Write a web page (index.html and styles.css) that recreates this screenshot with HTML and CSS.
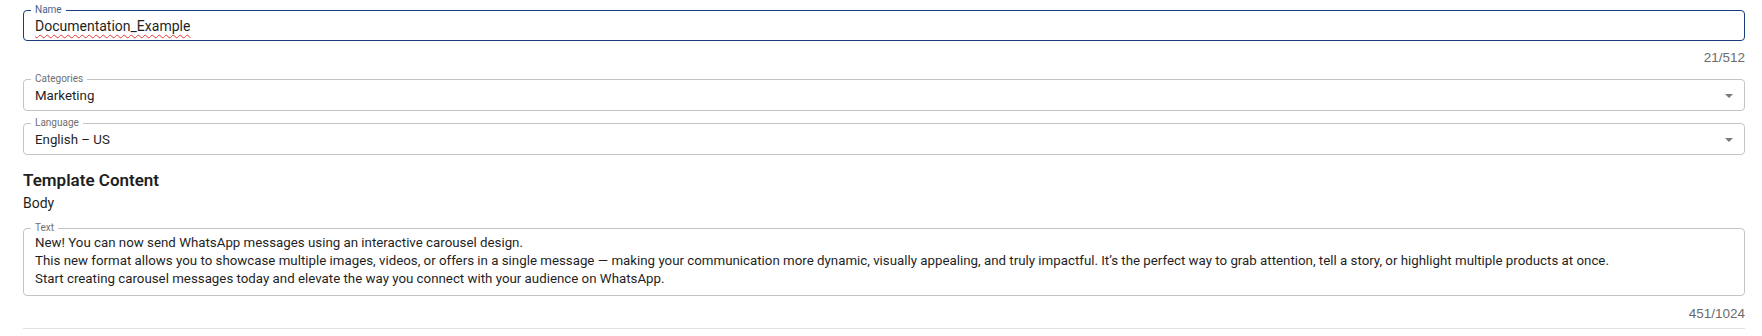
FILE: index.html
```html
<!DOCTYPE html>
<html lang="en">
<head>
<meta charset="utf-8">
<title>Template</title>
<link rel="stylesheet" href="styles.css">
</head>
<body>
<div class="form">
  <fieldset class="field field-focus">
    <legend class="field-label">Name</legend>
    <div class="field-value"><span class="spell">Documentation_Example</span></div>
  </fieldset>
  <div class="counter counter-name">21/512</div>

  <fieldset class="field field-cat">
    <legend class="field-label">Categories</legend>
    <div class="field-value select-row"><span>Marketing</span><span class="caret"></span></div>
  </fieldset>

  <fieldset class="field field-lang">
    <legend class="field-label">Language</legend>
    <div class="field-value select-row"><span>English – US</span><span class="caret"></span></div>
  </fieldset>

  <h2 class="section-title">Template Content</h2>
  <div class="sub-title">Body</div>

  <fieldset class="field field-text">
    <legend class="field-label">Text</legend>
    <div class="textarea">
      <div>New! You can now send WhatsApp messages using an interactive carousel design.</div>
      <div>This new format allows you to showcase multiple images, videos, or offers in a single message — making your communication more dynamic, visually appealing, and truly impactful. It’s the perfect way to grab attention, tell a story, or highlight multiple products at once.</div>
      <div>Start creating carousel messages today and elevate the way you connect with your audience on WhatsApp.</div>
    </div>
  </fieldset>
  <div class="counter counter-text">451/1024</div>
  <div class="divider"></div>
</div>
</body>
</html>
```

FILE: styles.css
```css
html, body {
  margin: 0;
  padding: 0;
  background: #ffffff;
}
body {
  font-family: Roboto, "Liberation Sans", sans-serif;
  color: #1f1f1f;
}
.form {
  display: flex;
  flex-direction: column;
  padding: 4px 17px 0 23px;
}
.field {
  margin: 0;
  padding: 0 11px;
  border: 1px solid #c4c4c4;
  border-radius: 4px;
  min-width: 0;
}
.field-focus {
  border-color: #173d7a;
}
.field-label {
  font-size: 10px;
  line-height: 12px;
  padding: 0 4px;
  margin-left: -4px;
  color: #6f6f6f;
}
.field-focus .field-label {
  color: #4a6390;
}
.field-value {
  margin-top: -4px;
  height: 29px;
  font-size: 13.3px;
  line-height: 29px;
  color: #1f1f1f;
}
.field-focus .field-value {
  height: 28px;
  line-height: 28px;
  font-size: 14px;
}
.spell {
  text-decoration: underline wavy #e53935;
  text-decoration-thickness: 1px;
  text-underline-offset: 3px;
}
.select-row {
  display: flex;
  align-items: center;
  justify-content: space-between;
}
.caret {
  width: 0;
  height: 0;
  margin-right: 0;
  border-left: 4px solid transparent;
  border-right: 4px solid transparent;
  border-top: 4px solid #7a7a7a;
}
.counter {
  align-self: flex-end;
  font-family: "Liberation Sans", Arial, sans-serif;
  font-size: 13.5px;
  line-height: 16px;
  color: #6b6b6b;
}
.counter-name {
  margin-top: 9px;
}
.field-cat {
  margin-top: 7px;
}
.field-lang {
  margin-top: 6px;
}
.section-title {
  margin: 15px 0 0;
  font-size: 17px;
  line-height: 20px;
  font-weight: 600;
  color: #1f1f1f;
}
.sub-title {
  margin-top: 4px;
  font-size: 14px;
  line-height: 18px;
  color: #1f1f1f;
}
.field-text {
  margin-top: 10px;
}
.textarea {
  padding: 0 0 7px;
  font-size: 13.3px;
  line-height: 18px;
  color: #1f1f1f;
}
.counter-text {
  margin-top: 10px;
}
.divider {
  margin-top: 6px;
  border-top: 1px solid #e2e2e2;
}
```
